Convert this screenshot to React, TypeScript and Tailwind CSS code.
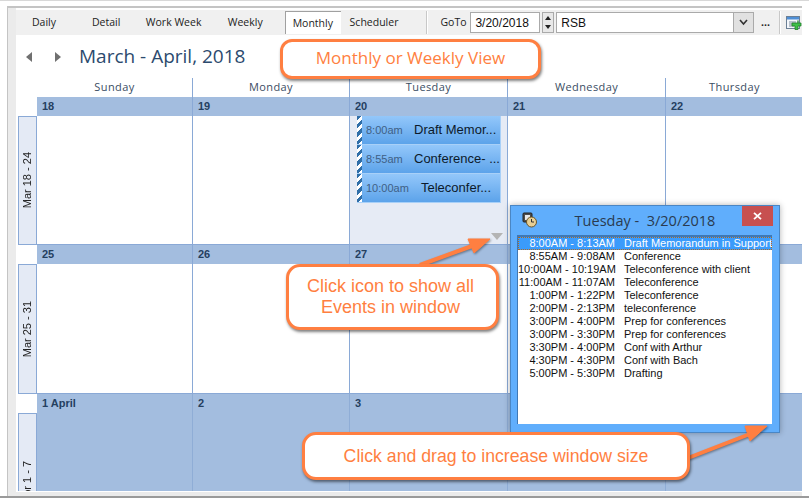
import React from 'react';

const ORANGE = '#ff7f41';

const TIMES = [
  ['8:00AM - 8:13AM', 'Draft Memorandum in Support of Motion'],
  ['8:55AM - 9:08AM', 'Conference'],
  ['10:00AM - 10:19AM', 'Teleconference with client'],
  ['11:00AM - 11:07AM', 'Teleconference'],
  ['1:00PM - 1:22PM', 'Teleconference'],
  ['2:00PM - 2:13PM', 'teleconference'],
  ['3:00PM - 4:00PM', 'Prep for conferences'],
  ['3:00PM - 3:30PM', 'Prep for conferences'],
  ['3:30PM - 4:00PM', 'Conf with Arthur'],
  ['4:30PM - 4:30PM', 'Conf with Bach'],
  ['5:00PM - 5:30PM', 'Drafting'],
];

const EVENTS = [
  { time: '8:00am', title: 'Draft Memor...', w: 'w-[48px]' },
  { time: '8:55am', title: 'Conference- ...', w: 'w-[48px]' },
  { time: '10:00am', title: 'Teleconfer...', w: 'w-[55px]' },
];

const COLS = 'grid grid-cols-[156px_157px_158px_158px_137px]';

const DateBar = ({ labels }: { labels: string[] }) => (
  <div className={`${COLS} h-[19px] bg-[#a3bddf]`}>
    {labels.map((label, i) => (
      <div key={i} className="border-r border-[#8aa9d6] pl-[5px] text-[11px] leading-[18px] font-bold text-[#25405f] last:border-r-0">
        {label}
      </div>
    ))}
  </div>
);

const Side = ({ label, className }: { label: string; className: string }) => (
  <div className={`w-[19px] shrink-0 overflow-hidden border border-[#8aa9d6] bg-[#e4eaf5] flex items-center justify-center ${className}`}>
    <span className="[writing-mode:vertical-rl] rotate-180 text-[11px] whitespace-nowrap text-[#222]">{label}</span>
  </div>
);

const EventCard = ({ time, title, w }: { time: string; title: string; w: string }) => (
  <div className="flex h-[29px] border-b border-[#a8d0f8]">
    <div className="w-[5px] shrink-0 bg-[repeating-linear-gradient(135deg,#2f6ea8_0,#2f6ea8_3px,#ffffff_3px,#ffffff_6px)]" />
    <div className="flex-1 min-w-0 flex items-center pl-[4px] bg-gradient-to-b from-[#93c7fa] to-[#5ca3ea] border-r border-[#a8d0f8]">
      <span className={`${w} shrink-0 text-[11px] text-[#3f5f85] whitespace-nowrap`}>{time}</span>
      <span className="text-[13px] text-[#0c1a2b] whitespace-nowrap">{title}</span>
    </div>
  </div>
);

export default function App() {
  return (
    <div className="relative w-[809px] h-[499px] overflow-hidden bg-white border-t border-[#d8d8d8] font-['Liberation_Sans',sans-serif]">
      {/* frame */}
      <div className="ml-[7px] mr-[7px] mt-[5px] h-[491px] border-t-2 border-l border-[#c4c4c4] bg-[#ebebeb] pl-[8px] flex flex-col">
        <div className="h-[484px] flex-none bg-white overflow-hidden">
          {/* toolbar */}
          <div className="mt-[2px] h-[25px] bg-[#f0f0f0] flex items-center font-['Open_Sans',sans-serif] text-[10.5px] text-[#1c1c1c]">
            <span className="ml-[16px] w-[60px]">Daily</span>
            <span className="w-[54px]">Detail</span>
            <span className="w-[82px]">Work Week</span>
            <span className="w-[57px]">Weekly</span>
            <span className="w-[56px] h-[23px] mt-[1px] self-start bg-white border-t border-l border-[#a0a0a0] pl-[7px] leading-[22px]">Monthly</span>
            <span className="ml-[9px] w-[77px]">Scheduler</span>
            <div className="h-[23px] w-[2px] border-l border-[#c8c8c8] bg-white" />
            <span className="ml-[12px] w-[30px]">GoTo</span>
            <div className="w-[70px] h-[21px] bg-white border border-[#aaa] pl-[4px] text-[12px] leading-[20px] font-['Liberation_Sans',sans-serif] text-[#111]">3/20/2018</div>
            <div className="ml-[2px] w-[12px] h-[21px] flex flex-col border border-[#aaa] bg-[#e8e8e8] items-center justify-around">
              <div className="w-0 h-0 border-x-[3px] border-x-transparent border-b-[4px] border-b-[#222]" />
              <div className="w-0 h-0 border-x-[3px] border-x-transparent border-t-[4px] border-t-[#222]" />
            </div>
            <div className="ml-[2px] w-[198px] h-[21px] bg-white border border-[#aaa] flex justify-between">
              <span className="pl-[4px] text-[12px] leading-[20px] font-['Liberation_Sans',sans-serif] text-[#111]">RSB</span>
              <div className="w-[20px] bg-[#e1e1e1] border-l border-[#aaa] flex items-center justify-center">
                <svg width="9" height="7" viewBox="0 0 9 7"><path d="M1 1l3.5 4L8 1" fill="none" stroke="#333" strokeWidth="1.6" /></svg>
              </div>
            </div>
            <span className="ml-[7px] w-[18px] font-bold text-[#222] leading-none">...</span>
            <div className="h-[23px] w-[2px] border-l border-[#c8c8c8] bg-white" />
            <svg className="ml-[5px]" width="16" height="16" viewBox="0 0 16 16">
              <rect x="0.5" y="1.5" width="13" height="12" fill="#f4f7fb" stroke="#6b7f95" />
              <rect x="1" y="2" width="12" height="2.5" fill="#4f8fd6" />
              <path d="M3 7h7M3 9h5M3 11h5" stroke="#7a8a9c" />
              <path d="M9 8h3V5.5h0V8h3v3h-3v3.5H9V11H6V8z" fill="#3fc04a" stroke="#1f7f2a" strokeWidth="0.8" />
            </svg>
          </div>

          {/* title row */}
          <div className="h-[43px] flex items-center">
            <div className="ml-[10px] w-0 h-0 border-y-[5px] border-y-transparent border-r-[6px] border-r-[#707070]" />
            <div className="ml-[23px] w-0 h-0 border-y-[5px] border-y-transparent border-l-[6px] border-l-[#707070]" />
            <span className="ml-[18px] text-[19px] text-[#2c4a6e] font-['Open_Sans',sans-serif]">March - April, 2018</span>
          </div>

          {/* day names */}
          <div className={`${COLS} h-[19px] ml-[21px]`}>
            {['Sunday', 'Monday', 'Tuesday', 'Wednesday', 'Thursday'].map(d => (
              <div key={d} className="border-r border-[#8aa9d6] last:border-r-0 text-center text-[11px] leading-[18px] tracking-[0.4px] text-[#3a4d63] font-['Open_Sans',sans-serif]">
                {d}
              </div>
            ))}
          </div>

          {/* week 1 */}
          <div className="ml-[21px]">
            <DateBar labels={['18', '19', '20', '21', '22']} />
          </div>
          <div className="flex h-[129px] ml-[2px]">
            <Side label="Mar 18 - 24" className="h-[129px]" />
            <div className={`${COLS} flex-1 border-b border-[#8aa9d6]`}>
              <div className="border-r border-[#8aa9d6]" />
              <div className="border-r border-[#8aa9d6]" />
              <div className="border-r border-[#8aa9d6] bg-[#e6ebf5] pl-[7px] pr-[6px]">
                {EVENTS.map(e => <EventCard key={e.time} {...e} />)}
              </div>
              <div className="border-r border-[#8aa9d6]" />
              <div />
            </div>
          </div>

          {/* week 2 */}
          <div className="ml-[21px]">
            <DateBar labels={['25', '26', '27', '28', '29']} />
          </div>
          <div className="flex h-[130px] ml-[2px]">
            <Side label="Mar 25 - 31" className="h-[130px]" />
            <div className={`${COLS} flex-1 border-b border-[#8aa9d6]`}>
              <div className="border-r border-[#8aa9d6]" />
              <div className="border-r border-[#8aa9d6]" />
              <div className="border-r border-[#8aa9d6]" />
              <div className="border-r border-[#8aa9d6]" />
              <div />
            </div>
          </div>

          {/* week 3 */}
          <div className="flex ml-[2px] h-[97px] overflow-hidden">
            <div className="flex flex-col w-[19px] shrink-0">
              <div className="h-[19px] shrink-0" />
              <Side label="Apr 1 - 7" className="h-[138px] border-b-0" />
            </div>
            <div className={`${COLS} flex-1 bg-[#a3bddf]`}>
              {['1 April', '2', '3', '', ''].map((d, i) => (
                <div key={i} className="border-r border-[#8fadd6] last:border-r-0 pl-[5px] text-[11px] leading-[18px] font-bold text-[#25405f]">
                  {d}
                </div>
              ))}
            </div>
          </div>
        </div>
      </div>
      <div className="absolute left-0 right-0 top-[495px] h-[2px] bg-[#9a9a9a]" />

      {/* more events triangle */}
      <div className="absolute left-[491px] top-[232px] w-0 h-0 border-x-[6px] border-x-transparent border-t-[7px] border-t-[#b4b4b4]" />

      {/* day popup */}
      <div className="absolute left-[510px] top-[204px] w-[270px] h-[228px] bg-[#60aefc] border border-[#4a86c4] shadow-[0_0_6px_rgba(0,0,0,0.3)] flex flex-col">
        <div className="relative h-[29px] flex items-center justify-center">
          <svg className="absolute left-[10px] top-[5px]" width="16" height="17" viewBox="0 0 16 17">
            <rect x="2" y="2" width="9" height="9" rx="1" fill="#4d4d4d" stroke="#222" />
            <rect x="4" y="4" width="5" height="5" fill="#e8e8e8" />
            <circle cx="10.5" cy="11" r="5" fill="#e8cf94" stroke="#6b5527" />
            <path d="M10.5 8v3h2.5" fill="none" stroke="#333" />
          </svg>
          <span className="text-[14.5px] text-[#2a3b50] font-['Open_Sans',sans-serif] whitespace-pre">Tuesday -  3/20/2018</span>
          <div className="absolute right-[6px] top-0 w-[31px] h-[20px] bg-[#c75050] flex items-center justify-center">
            <svg width="9" height="8" viewBox="0 0 9 8"><path d="M1 0.8l7 6.4M8 0.8l-7 6.4" stroke="#fff" strokeWidth="1.8" /></svg>
          </div>
        </div>
        <div className="ml-[6px] mr-[7px] h-[189px] bg-white border-t-2 border-l border-[#3f78b5] overflow-hidden text-[11px] leading-[13px] text-[#111]">
          {TIMES.map(([t, name], i) => (
            <div key={i} className={`flex whitespace-nowrap h-[13px] ${i === 0 ? 'bg-[#3b9bfb] text-white outline-1 -outline-offset-1 outline-dotted outline-[#b06a20]' : ''}`}>
              <span className="w-[97px] shrink-0 text-right">{t}</span>
              <span className="ml-[9px]">{name}</span>
            </div>
          ))}
        </div>
      </div>

      {/* arrows */}
      <svg className="absolute left-0 top-0 pointer-events-none" width="809" height="499" viewBox="0 0 809 499">
        <g fill={ORANGE} stroke={ORANGE} filter="drop-shadow(1px 1px 1px rgba(0,0,0,0.4))">
          <path d="M420 264L472 245" strokeWidth="4" />
          <path d="M490 238L468 238L474 252z" />
          <path d="M688 457L750 433" strokeWidth="4" />
          <path d="M767 425L745 425L750 440z" />
        </g>
      </svg>

      {/* callouts */}
      <div className="absolute left-[280px] top-[38px] w-[261px] h-[40px] rounded-[12px] border-[3px] border-[#ff7f41] bg-white shadow-[1px_2px_3px_rgba(0,0,0,0.5)] flex items-center justify-center pb-[2px] text-[17px] text-[#ff7f41] font-['Open_Sans',sans-serif]">
        Monthly or Weekly View
      </div>
      <div className="absolute left-[286px] top-[263px] w-[213px] h-[66px] rounded-[14px] border-[3px] border-[#ff7f41] bg-white shadow-[1px_2px_3px_rgba(0,0,0,0.5)] flex items-center justify-center pr-[4px] pb-[1px] text-center text-[18px] leading-[21px] text-[#ff7f41]">
        Click icon to show all<br />Events in window
      </div>
      <div className="absolute left-[302px] top-[431px] w-[388px] h-[48px] rounded-[14px] border-[3px] border-[#ff7f41] bg-white shadow-[1px_2px_3px_rgba(0,0,0,0.5)] flex items-center justify-center text-[17.7px] text-[#ff7f41]">
        Click and drag to increase window size
      </div>
    </div>
  );
}
